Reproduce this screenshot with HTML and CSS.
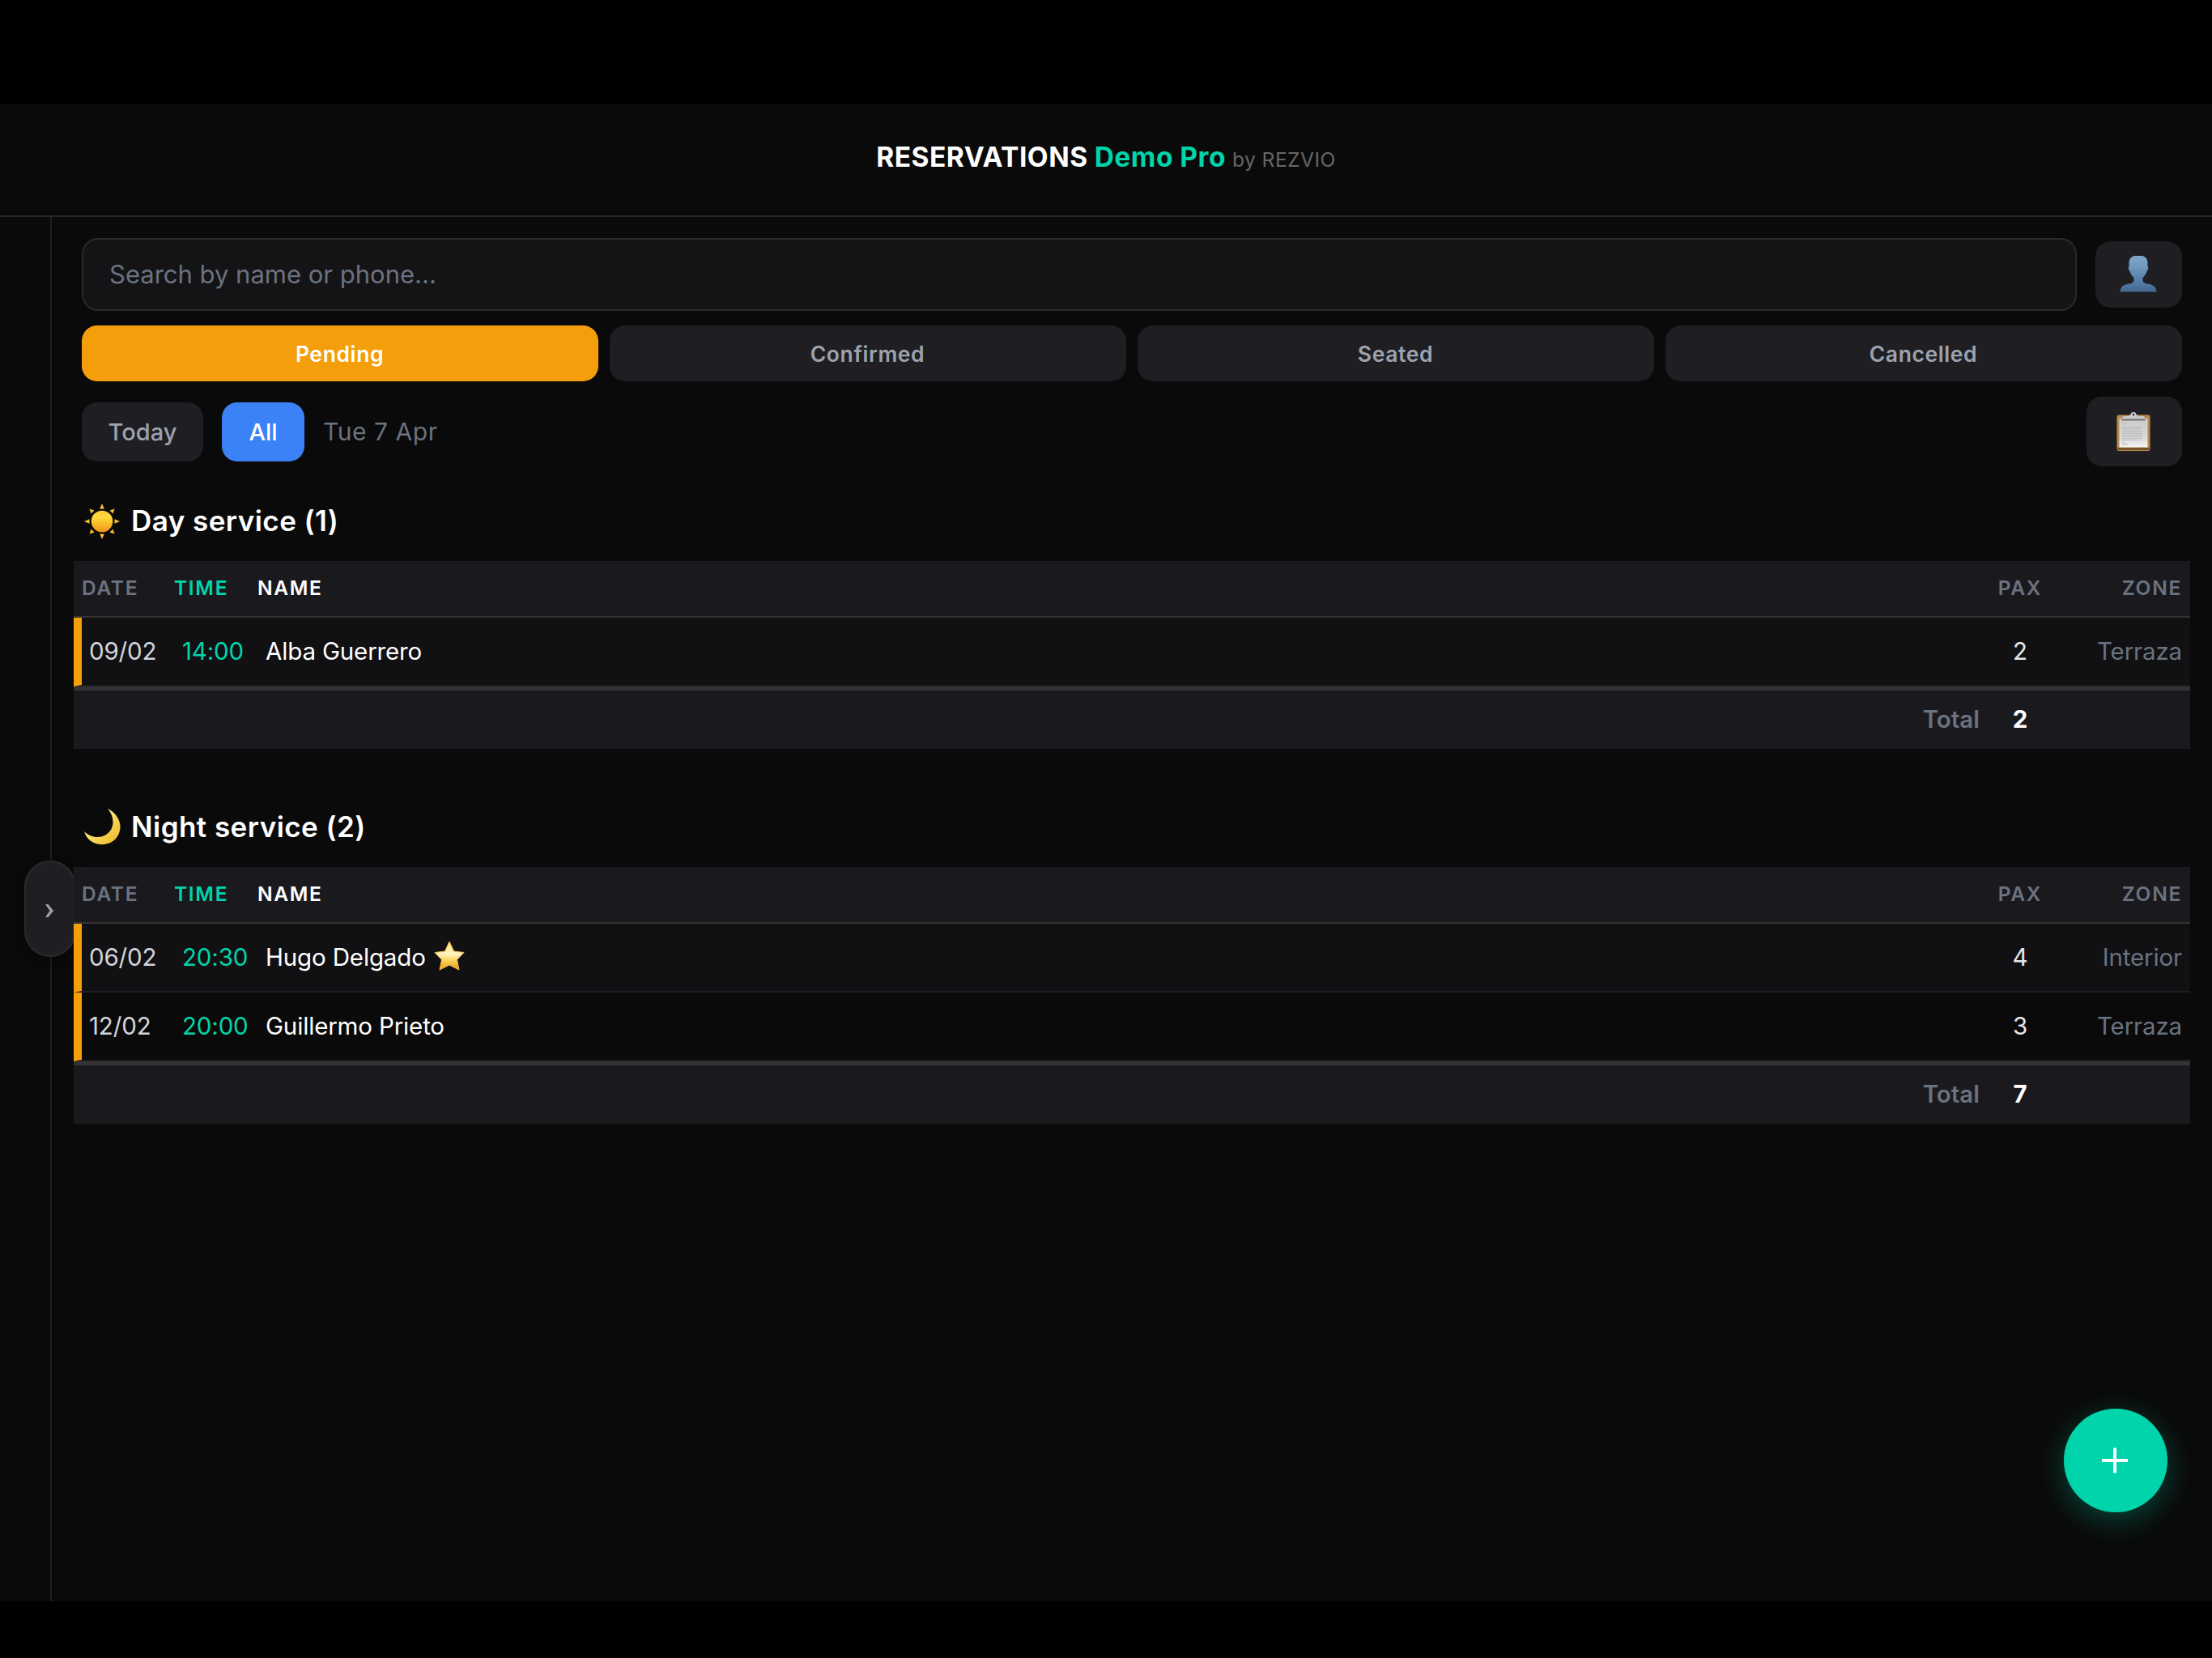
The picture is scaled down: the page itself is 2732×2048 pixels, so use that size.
FILE: index.html
```html
<!DOCTYPE html>
<html lang="en">
<head>
    <meta charset="UTF-8">
    <meta name="viewport" content="width=device-width, initial-scale=1.0">
    <title>Reservations</title>
    <link rel="stylesheet" href="styles.css">
</head>
<body>
    <header class="header">
        <h1><span class="brand">RESERVATIONS</span><span class="venue">Demo Pro</span><span class="by">by REZVIO</span></h1>
    </header>

    <div class="layout">
        <aside class="sidebar">
            <button class="toggle">
                <svg width="12" height="18" viewBox="0 0 12 18"><path d="M1 1 H4.500 L11 9 L4.500 17 H1 L6.500 9 Z" fill="#9ca3af"/></svg>
            </button>
        </aside>

        <main class="main">
            <div class="search-row">
                <input type="text" class="search" placeholder="Search by name or phone...">
                <button class="icon-btn user-btn">
                    <svg width="46" height="46" viewBox="0 0 46 46">
                        <defs><linearGradient id="user" x1="0" y1="0" x2="0" y2="1"><stop offset="0" stop-color="#7fa9cb"/><stop offset="0.6" stop-color="#5c86b0"/><stop offset="1" stop-color="#44688f"/></linearGradient></defs>
                        <path d="M18 1 H28 C32 2 34.500 5 34.500 10 V14 C36 15 35 18.500 33.800 19.500 C32.500 24 30 26.500 28.500 28 C28 33 29.500 34.500 33 35.500 C40 36 45 38 45.500 45.500 H.5 C1 38 6 36 13 35.500 C16.500 34.500 18 33 17.500 28 C16 26.500 13.500 24 12.200 19.500 C11 18.500 10 15 11.500 14 V10 C11.500 5 14 2 18 1 Z" fill="url(#user)"/>
                    </svg>
                </button>
            </div>

            <div class="tabs">
                <button class="tab active">Pending</button>
                <button class="tab">Confirmed</button>
                <button class="tab">Seated</button>
                <button class="tab">Cancelled</button>
            </div>

            <div class="filters">
                <button class="filter">Today</button>
                <button class="filter selected">All</button>
                <span class="date">Tue 7 Apr</span>
                <button class="icon-btn list-btn">
                    <svg width="42" height="48" viewBox="0 0 42 48">
                        <defs><linearGradient id="paper" x1="0" y1="0" x2="0" y2="1"><stop offset="0" stop-color="#cbcbcb"/><stop offset="0.7" stop-color="#dadada"/><stop offset="1" stop-color="#f6f6f6"/></linearGradient></defs>
                        <rect x=".5" y="3.500" width="41" height="44.500" rx="2.500" fill="#b88b4c"/>
                        <rect x="1.500" y="44" width="39" height="3" fill="#74522a"/>
                        <rect x="3.500" y="8" width="35" height="35.500" fill="url(#paper)"/>
                        <path d="M7 14.500 H12 M7 18.500 H31 M7 20.500 H32 M7 22.500 H31 M7 24.500 H33 M7 26.500 H32 M7 28.500 H33 M7 30.500 H32 M7 32.500 H32 M7 34.500 H27 M7 38 H11 M7 40 H15" stroke="#bcbcbc" stroke-width="1.200"/>
                        <path d="M7 9 V7.500 Q7 5 10 5 H15 L18.500 2 H23.500 L27 5 H32 Q35 5 35 7.500 V9 Z" fill="#c6c8ce"/>
                        <rect x="6.500" y="8.500" width="29" height="2" fill="#77706a"/>
                        <circle cx="21" cy="3.200" r="2.300" fill="#333" stroke="#cfd2d8" stroke-width="1.800"/>
                    </svg>
                </button>
            </div>

            <section class="service">
                <h2>
                    <svg class="sun" width="44" height="44" viewBox="0 0 44 44">
                        <defs><linearGradient id="sun" x1="0" y1="0" x2="0" y2="1"><stop offset="0" stop-color="#ffc93a"/><stop offset="0.3" stop-color="#ffdc3c"/><stop offset="1" stop-color="#ee9316"/></linearGradient></defs>
                        <path d="M22 0 L24.800 6.500 H19.200 Z M22 44 L24.800 37.500 H19.200 Z M0 22 L6.500 19.200 V24.800 Z M44 22 L37.500 19.200 V24.800 Z M6.500 6.500 L12.500 8.500 L8.500 12.500 Z M37.500 6.500 L31.500 8.500 L35.500 12.500 Z M6.500 37.500 L12.500 35.500 L8.500 31.500 Z M37.500 37.500 L31.500 35.500 L35.500 31.500 Z" fill="#f8bd36"/>
                        <circle cx="22" cy="22" r="13.300" fill="url(#sun)"/>
                    </svg>
                    <span>Day service (1)</span>
                </h2>
                <table>
                    <thead>
                        <tr><th class="c-date">Date</th><th class="c-time">Time</th><th class="c-name">Name</th><th class="c-pax">Pax</th><th class="c-zone">Zone</th></tr>
                    </thead>
                    <tbody>
                        <tr><td class="c-date">09/02</td><td class="c-time">14:00</td><td class="c-name">Alba Guerrero</td><td class="c-pax">2</td><td class="c-zone">Terraza</td></tr>
                    </tbody>
                    <tfoot>
                        <tr><td colspan="3" class="total">Total</td><td class="c-pax">2</td><td></td></tr>
                    </tfoot>
                </table>
            </section>

            <section class="service">
                <h2>
                    <svg width="46" height="46" viewBox="0 0 46 46">
                        <defs><linearGradient id="moon" x1="0" y1="0" x2="1" y2="1"><stop offset="0.3" stop-color="#fff08a"/><stop offset="0.65" stop-color="#f6d04a"/><stop offset="0.8" stop-color="#f3c33c"/><stop offset="1" stop-color="#e9a62b"/></linearGradient></defs>
                        <path d="M30 1 C39 5 45.500 14 45.500 23 C45.500 36 36 45 23 45 C12 45 4 39 1 29 C9 37 20 38 28 33 C39 26 39 11 30 1 Z" fill="url(#moon)"/>
                    </svg>
                    <span>Night service (2)</span>
                </h2>
                <table>
                    <thead>
                        <tr><th class="c-date">Date</th><th class="c-time">Time</th><th class="c-name">Name</th><th class="c-pax">Pax</th><th class="c-zone">Zone</th></tr>
                    </thead>
                    <tbody>
                        <tr>
                            <td class="c-date">06/02</td><td class="c-time">20:30</td>
                            <td class="c-name"><span class="guest">Hugo Delgado
                                <svg width="38" height="40" viewBox="0 0 38 40">
                                    <defs><linearGradient id="star" x1="0" y1="0" x2="0" y2="1"><stop offset="0" stop-color="#ffe27a"/><stop offset="0.45" stop-color="#fff3c4"/><stop offset="0.65" stop-color="#fbd55e"/><stop offset="1" stop-color="#ee9c10"/></linearGradient></defs>
                                    <path d="M19 1 L24.500 13 L37 14.500 L28.500 23.500 L31 36 L19 30 L7 36 L9.500 23.500 L1 14.500 L13.500 13 Z" fill="url(#star)" stroke="#f0b94a" stroke-width="1" stroke-linejoin="round"/>
                                </svg></span>
                            </td>
                            <td class="c-pax">4</td><td class="c-zone">Interior</td>
                        </tr>
                        <tr><td class="c-date">12/02</td><td class="c-time">20:00</td><td class="c-name">Guillermo Prieto</td><td class="c-pax">3</td><td class="c-zone">Terraza</td></tr>
                    </tbody>
                    <tfoot>
                        <tr><td colspan="3" class="total">Total</td><td class="c-pax">7</td><td></td></tr>
                    </tfoot>
                </table>
            </section>
        </main>
    </div>

    <button class="fab">
        <svg width="32" height="32" viewBox="0 0 32 32"><path d="M16 .5 V31.500 M0 16 H32" stroke="#fff" stroke-width="4"/></svg>
    </button>
</body>
</html>
```
FILE: styles.css
```css
* {
    box-sizing: border-box;
}
body {
    font-family: Inter, sans-serif;
    background: #0a0a0a;
    color: #fff;
    margin: 0;
    height: 2048px;
    border-top: 128px solid #000;
    border-bottom: 70px solid #000;
    overflow: hidden;
    display: flex;
    flex-direction: column;
}
button {
    font-family: inherit;
    border: none;
    padding: 0;
    display: flex;
    align-items: center;
    justify-content: center;
}
svg {
    display: block;
    flex: none;
}
.header {
    height: 140px;
    flex: none;
    border-bottom: 2px solid #27272a;
    text-align: center;
    padding-top: 45px;
}
h1 {
    margin: 0;
    font-size: 33.5px;
    line-height: 42px;
    font-weight: 700;
    letter-spacing: 0.5px;
    display: flex;
    justify-content: center;
    align-items: baseline;
}
.venue {
    color: #00d4aa;
    margin-left: 8px;
}
.by {
    color: #666;
    font-size: 24.5px;
    font-weight: 400;
    letter-spacing: 0.5px;
    margin-left: 8px;
}
.layout {
    flex: 1;
    display: flex;
}
.sidebar {
    width: 64px;
    flex: none;
    border-right: 2px solid #1f1f23;
    position: relative;
}
.toggle {
    position: absolute;
    left: 30px;
    top: 795px;
    width: 64px;
    height: 119px;
    padding: 4px 2px 0 0;
    border: 2px solid #2a2a2e;
    border-radius: 32px;
    background: #1f1f23;
    box-shadow: 0 4px 16px rgba(0,0,0,0.4);
}
.main {
    flex: 1;
    padding: 26px 27px 0;
    position: relative;
}
.search-row {
    display: flex;
    align-items: center;
    gap: 23px;
    padding: 0 10px;
}
.search {
    flex: 1;
    height: 90px;
    border: 2px solid #2a2a2e;
    border-radius: 20px;
    background: #141416;
    color: #fff;
    font-family: inherit;
    font-size: 31px;
    padding: 0 32px 2px;
}
.search::placeholder {
    color: #6b7280;
}
.icon-btn {
    background: #1f1f23;
    border-radius: 19px;
}
.user-btn {
    width: 107px;
    height: 82px;
    padding: 0 2px 3px 0;
}
.tabs {
    display: grid;
    grid-template-columns: repeat(4, 1fr);
    gap: 14px;
    padding: 0 10px;
    margin-top: 18px;
}
.tab {
    height: 69px;
    padding: 0 1px 0 0;
    border-radius: 19px;
    background: #1f1f23;
    color: #9ca3af;
    font-size: 26.5px;
    font-weight: 600;
    letter-spacing: 0.6px;
}
.tab.active {
    background: #f59e0b;
    color: #fff;
}
.filters {
    display: flex;
    align-items: center;
    padding: 0 10px;
    margin-top: 19px;
}
.filter {
    width: 150px;
    height: 73px;
    border-radius: 19px;
    background: #1f1f23;
    color: #9ca3af;
    font-size: 29px;
    font-weight: 500;
    margin-right: 23px;
}
.filter.selected {
    width: 102px;
    background: #3b82f6;
    color: #fff;
}
.date {
    color: #6b7280;
    font-size: 30px;
    letter-spacing: 0.55px;
}
.list-btn {
    width: 118px;
    height: 86px;
    padding-right: 2px;
    margin-left: auto;
}
.service h2 {
    margin: 0;
    padding: 39px 0 22px 12px;
    height: 117px;
    display: flex;
    align-items: center;
    gap: 13px;
    font-size: 35px;
    font-weight: 600;
    letter-spacing: 0.45px;
}
.sun {
    margin: 2px 1px 0;
}
.service + .service {
    margin-top: 29px;
}
table {
    width: 100%;
    border-collapse: separate;
    border-spacing: 0;
    table-layout: fixed;
}
th {
    height: 70px;
    padding: 0 10px 2px 10px;
    background: #1a1a1e;
    border-bottom: 2px solid #333;
    color: #6b7280;
    font-size: 24.5px;
    font-weight: 600;
    letter-spacing: 1.7px;
    text-transform: uppercase;
    text-align: left;
}
th.c-date {
    width: 114px;
}
th.c-time {
    width: 103px;
    color: #00d4aa;
}
th.c-name {
    color: #fff;
}
th.c-pax {
    width: 100px;
}
th.c-zone {
    width: 160px;
    text-align: right;
}
.c-pax {
    text-align: center;
}
tbody td {
    height: 85px;
    padding: 0 10px 2px 20px;
    border-bottom: 2px solid #1f1f23;
    font-size: 29.5px;
    letter-spacing: -0.15px;
}
tbody tr:nth-child(odd) {
    background: #111113;
}
tbody td.c-date {
    border-left: 10px solid #f59e0b;
    padding-left: 9px;
    color: #d1d5db;
}
td.c-time {
    color: #00d4aa;
}
tbody td.c-pax {
    padding: 0 0 2px;
    color: #e5e7eb;
}
td.c-zone {
    text-align: right;
    color: #6b7280;
}
.guest {
    display: flex;
    align-items: center;
    gap: 10px;
}
tfoot td {
    height: 77px;
    padding: 0 0 2px;
    background: #1a1a1e;
    border-top: 5px solid #333;
    font-size: 29.5px;
    font-weight: 700;
}
td.total {
    text-align: right;
    color: #6b7280;
    font-weight: 600;
}
.fab {
    position: absolute;
    left: 2549px;
    top: 1740px;
    width: 128px;
    height: 128px;
    border-radius: 50%;
    background: #00d4aa;
    padding: 0 3px 0 0;
    box-shadow: 0 9px 36px rgba(0,212,170,0.3);
}
```
